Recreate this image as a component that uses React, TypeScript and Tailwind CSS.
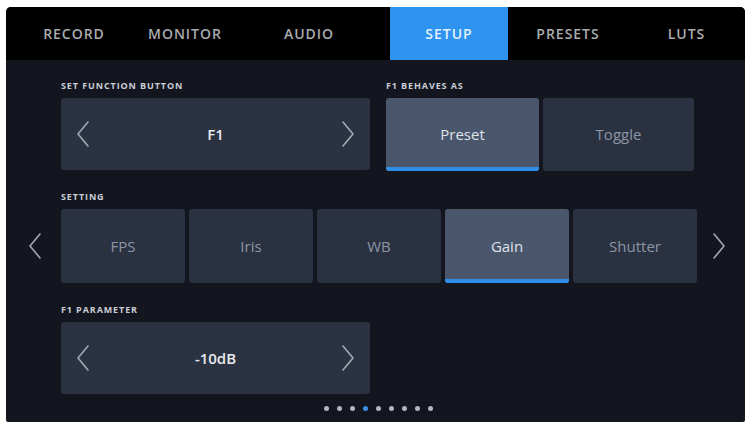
import React from 'react';

const tabs = [
  { label: 'RECORD', w: 'w-[136px]' },
  { label: 'MONITOR', w: 'w-[86px]' },
  { label: 'AUDIO', w: 'w-[162px]' },
  { label: 'SETUP', w: 'w-[118px]', active: true },
  { label: 'PRESETS', w: 'w-[120px]' },
  { label: 'LUTS', w: 'w-[117px]' },
];

const settings = [
  { label: 'FPS' },
  { label: 'Iris' },
  { label: 'WB' },
  { label: 'Gain', active: true },
  { label: 'Shutter' },
];

function Chevron({ dir, className = '' }: { dir: 'left' | 'right'; className?: string }) {
  return (
    <svg width="14" height="26" viewBox="0 0 14 26" className={className}>
      <polyline
        points={dir === 'left' ? '12,1 2,13 12,25' : '2,1 12,13 2,25'}
        fill="none"
        stroke="#a3a9b3"
        strokeWidth="1.6"
        strokeLinecap="round"
        strokeLinejoin="round"
      />
    </svg>
  );
}

function Label({ children }: { children: React.ReactNode }) {
  return (
    <div className="h-[12px] mb-[6px] text-[9px] leading-[12px] font-bold tracking-[0.1em] text-[#c9ced6] uppercase">
      {children}
    </div>
  );
}

function Stepper({ value }: { value: string }) {
  return (
    <div className="w-[309px] h-[72px] rounded-[3px] bg-[#2b3342] flex items-center justify-between px-[15px]">
      <Chevron dir="left" />
      <span className="text-[15px] text-[#e8eaee] font-semibold">{value}</span>
      <Chevron dir="right" />
    </div>
  );
}

function Choice({ label, active, w, h }: { label: string; active?: boolean; w: string; h: string }) {
  return (
    <div
      className={`${w} ${h} relative rounded-[3px] flex items-center justify-center overflow-hidden ${
        active ? 'bg-[#4a566b] text-[#dfe3ea] font-medium' : 'bg-[#2a3140] text-[#8d96a6]'
      }`}
    >
      <span className="text-[15px]">{label}</span>
      {active && <div className="absolute left-0 right-0 bottom-0 h-[4px] bg-[#2f8fe8]" />}
    </div>
  );
}

export default function App() {
  return (
    <div className="w-[751px] h-[426px] bg-white pl-[6px] pt-[7px] font-['Open_Sans',sans-serif]">
      <div className="w-[739px] h-[415px] rounded-t-[5px] rounded-b-[2px] overflow-hidden flex flex-col bg-[#13161f]">
        {/* tabs */}
        <div className="h-[53px] bg-black flex shrink-0">
          {tabs.map((t) => (
            <div
              key={t.label}
              className={`${t.w} flex items-center justify-center text-[14px] font-semibold tracking-[0.07em] ${
                t.active ? 'bg-[#2f93f0] text-[#e6f1ff]' : 'text-[#a9abae]'
              }`}
            >
              {t.label}
            </div>
          ))}
        </div>

        {/* body */}
        <div className="flex-1 flex flex-col pt-[20px]">
          <div className="flex pl-[55px] gap-[16px]">
            <div>
              <Label>Set function button</Label>
              <Stepper value="F1" />
            </div>
            <div>
              <Label>F1 behaves as</Label>
              <div className="flex gap-[4px]">
                <Choice label="Preset" active w="w-[153px]" h="h-[73px]" />
                <Choice label="Toggle" w="w-[151px]" h="h-[73px]" />
              </div>
            </div>
          </div>

          <div className="mt-[20px] flex">
            <div className="w-[55px] flex items-end justify-center pb-[24px]">
              <Chevron dir="left" className="ml-[2px]" />
            </div>
            <div>
              <Label>Setting</Label>
              <div className="flex gap-[4px]">
                {settings.map((s) => (
                  <Choice key={s.label} label={s.label} active={s.active} w="w-[124px]" h="h-[74px]" />
                ))}
              </div>
            </div>
            <div className="flex-1 flex items-end justify-center pb-[24px]">
              <Chevron dir="right" className="mr-[4px]" />
            </div>
          </div>

          <div className="mt-[21px] pl-[55px]">
            <Label>F1 parameter</Label>
            <Stepper value="-10dB" />
          </div>

          <div className="mt-[12px] flex justify-center gap-[8px] pl-[6px]">
            {Array.from({ length: 9 }).map((_, i) => (
              <div
                key={i}
                className={`w-[5px] h-[5px] rounded-full ${i === 3 ? 'bg-[#3b8fe8]' : 'bg-[#b3b7bf]'}`}
              />
            ))}
          </div>
        </div>
      </div>
    </div>
  );
}
